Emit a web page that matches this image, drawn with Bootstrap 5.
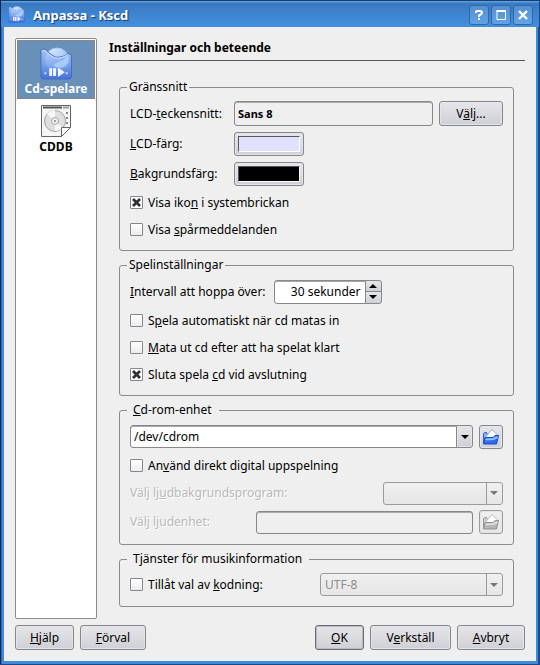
<!DOCTYPE html>
<html lang="sv">
<head>
<meta charset="utf-8">
<meta name="viewport" content="width=device-width, initial-scale=1">
<title>Anpassa - Kscd</title>
<link href="https://cdn.jsdelivr.net/npm/bootstrap@5.3.0/dist/css/bootstrap.min.css" rel="stylesheet">
<style>
  :root { --line: #8b8b8b; --edge: #86878c; --face: #efefef; }
  body { font-family: "Noto Sans", "Open Sans", sans-serif; font-size: 12px; line-height: 18px; color: #000; background: #1c4a80; }
  .win { background: linear-gradient(90deg, #10294a 0 1px, #2a6cb8 1px 2px, #3f8bdb 2px calc(100% - 2px), #1c4a80 calc(100% - 2px)); padding: 0 4px 3px; border-bottom: 1px solid #1c4a80; }
  .titlebar { height: 27px; margin: 0 -3px; padding: 2px 6px 0 7px; color: #fff; background: linear-gradient(#1c3c66 0 1px, #5c9ee4 1px 2px, #3a78bf 3px, #3f86d2 60%, #428fde); }
  .titlebar h1 { font-size: 13px; line-height: 20px; text-shadow: 1px 1px 1px #173a66; }
  .capbtn { width: 20px; height: 20px; margin-left: 2px; padding: 0; border: 1px solid #2f68a8; border-radius: 3px; background: linear-gradient(#5590d0, #62a2e6); }
  .capbtn svg, .pagebtn svg, .iconbtn svg { display: block; margin: auto; }
  .client { background: var(--face); padding: 11px; }
  .pages { width: 82px; background: #fff; border: 1px solid var(--line); border-radius: 2px; padding: 1px; }
  .pagebtn { border: 0; background: #fff; font-weight: 700; padding: 4px 0 0; line-height: 18px; height: 57px; width: 100%; color: #000; }
  .pagebtn.current { background: #6990b8; color: #fff; height: 59px; padding-top: 5px; outline: 1px dotted #a87a5c; outline-offset: -1px; }
  .pagetitle { font-size: 12px; line-height: 18px; font-weight: 700; border-bottom: 1px solid #555; padding: 1px 0 3px; margin-bottom: 0; }
  .options { padding: 17px 11px 0 10px; }
  .group { border: 1px solid var(--line); border-radius: 3px; padding: 5px 10px 10px; margin-bottom: 5px; }
  .group legend { font-size: 12px; line-height: 18px; margin: 0 0 0 -3px; padding: 0 2px; }
  .group legend.wide { padding: 0 7px 0 6px; }
  .stack { display: flex; flex-direction: column; gap: 6px; }
  .line-25 { height: 25px; } .line-24 { height: 24px; } .line-22 { height: 22px; }
  .caption { width: 104px; }
  .field { height: 23px; min-width: 0; padding: 0 3px; font-size: 12px; line-height: 18px; color: #000; background: #fff; border: 1px solid var(--edge); border-radius: 3px; box-shadow: inset 0 1px 0 #aaa; }
  .field:disabled, .field[readonly] { background: var(--face); }
  .fontname { height: 25px; font-size: 11px; font-weight: 700; }
  .dimmed { color: #b9b9b9; text-shadow: 1px 1px 0 #fff; }
  .push { height: 25px; padding: 0 4px; font-size: 12px; line-height: 18px; color: #000; border: 1px solid var(--edge); border-radius: 3px; background: linear-gradient(#e6e6ea, #cfd0d5); box-shadow: inset 0 0 0 1px #e4e5e9; }
  .push.primary { border-color: #6c6d72; box-shadow: inset 0 0 0 1px #b9bac0; }
  .push:disabled { background: linear-gradient(#f0f0f0, #e6e6e6); border-color: #9b9b9b; }
  .pick { margin-left: 6px; }
  .w-help { width: 59px; } .w-def { width: 66px; } .w-ok { width: 49px; } .w-apply { width: 81px; } .w-cancel { width: 68px; } .w-pick { width: 64px; }
  .iconbtn { width: 24px; height: 24px; padding: 0; }
  .swatch { width: 70px; height: 24px; padding: 3px; }
  .swatch::-webkit-color-swatch-wrapper { padding: 0; }
  .swatch::-webkit-color-swatch { border: 1px solid #fff; border-top-color: #55565a; border-left-color: #55565a; border-radius: 0; }
  .tick { display: flex; align-items: center; gap: 5px; height: 21px; }
  .tick input { appearance: none; width: 13px; height: 13px; margin: 0; border: 1px solid var(--edge); border-radius: 1px; background: linear-gradient(#fff, #ececec); }
  .tick input:checked { background: #fff url("data:image/svg+xml,%3Csvg xmlns='http://www.w3.org/2000/svg' viewBox='0 0 11 11'%3E%3Cpath d='M2 2l7 7M9 2L2 9' stroke='%23303034' stroke-width='2.8'/%3E%3C/svg%3E"); }
  .spin { width: 108px; height: 24px; }
  .spin .field { height: 24px; text-align: right; border-radius: 3px 0 0 3px; padding-right: 4px; }
  .steps { width: 17px; margin-left: -1px; }
  .steps .push { height: 12px; padding: 0; border-radius: 0 3px 0 0; box-shadow: none; line-height: 0; }
  .steps .push + .push { height: 13px; margin-top: -1px; border-radius: 0 0 3px 0; }
  .steps svg, .arrow svg { display: block; margin: auto; }
  .arrow { width: 17px; height: 23px; padding: 0; margin-left: -1px; border-radius: 0 3px 3px 0; }
  .choice { height: 23px; padding: 0 20px 0 4px; font-size: 12px; border: 1px solid #9b9b9b; border-radius: 3px; color: #8c8c8c; opacity: 1; appearance: none;
    background: linear-gradient(#9b9b9b, #9b9b9b) right 15px top / 1px 100% no-repeat,
      url("data:image/svg+xml,%3Csvg xmlns='http://www.w3.org/2000/svg' width='8' height='4'%3E%3Cpath d='M0 0h8L4 4z' fill='%23777'/%3E%3C/svg%3E") right 4px center no-repeat,
      linear-gradient(#f0f0f0, #e6e6e6); }
  .choice.backend { width: 120px; } .choice.encoding { width: 183px; }
  .device { width: 217px; }
  .footer-row { padding-top: 6px; gap: 6px; }
</style>
</head>
<body>
<div class="win d-flex flex-column min-vh-100">
  <header class="titlebar d-flex align-items-center">
    <svg width="17" height="17" viewBox="0 0 34 34" aria-hidden="true"><use href="#cdfolder"/></svg>
    <h1 class="fw-bold mb-0 ms-2 me-auto">Anpassa - Kscd</h1>
    <button class="capbtn" aria-label="Hjälp"><svg width="12" height="12" viewBox="0 0 12 12" fill="none" stroke="#fff" stroke-width="2"><path d="M3 4V2.500Q3 2 4 2h3q2 0 2 1.500T6 6.500V8M6 9v2"/></svg></button>
    <button class="capbtn" aria-label="Maximera"><svg width="12" height="12" viewBox="0 0 12 12" fill="none" stroke="#fff"><path d="M2 2.500h8.500v8H2z"/><path d="M1.500 2h9.500" stroke-width="2"/></svg></button>
    <button class="capbtn" aria-label="Stäng"><svg width="12" height="12" viewBox="0 0 12 12" stroke="#fff" stroke-width="2.400"><path d="M2 2l8 8M10 2l-8 8"/></svg></button>
  </header>

  <main class="client flex-grow-1 d-flex flex-column">
    <div class="d-flex flex-grow-1">
      <nav class="pages flex-shrink-0" aria-label="Sidor">
        <button class="pagebtn current" aria-current="page">
          <svg width="34" height="33" viewBox="0 0 34 34" aria-hidden="true">
            <defs>
              <linearGradient id="blue" x1="0" y1="0" x2="0" y2="1"><stop offset="0" stop-color="#b4ccfa"/><stop offset=".5" stop-color="#7fa5f0"/><stop offset="1" stop-color="#4169dc"/></linearGradient>
              <linearGradient id="disc" x1="0" y1="0" x2="1" y2="1"><stop offset="0" stop-color="#e6f0fd"/><stop offset="1" stop-color="#78b0ee"/></linearGradient>
            </defs>
            <g id="cdfolder">
              <circle cx="18" cy="13" r="12" fill="url(#disc)" stroke="#a5c6f0"/>
              <path d="M1.500 4q0-1.500 1.500-1.500h3.500l3 3.500 7 4.500q8 .5 13-4l3 1.500q.500 1 .500 2v20q0 3-3 3H4q-2.500 0-2.500-3z" fill="url(#blue)" fill-opacity=".82" stroke="#3f68d6"/>
              <path d="M2.500 3.500h3.500l3 3.500 7 4.500q8 .5 13-4" fill="none" stroke="#d5e4ff" stroke-width="1"/>
              <path d="M14 19q3-3 7-4 6-2 8-7 3 8-3 12-6 3-12-1z" fill="#b4d8fb" fill-opacity=".7"/>
              <path d="M10 22h3v8h-3zM14 22h3v8h-3zM19 21l7 5-7 5z" fill="#eef4ff"/>
              <path d="M5 26h2v2H5zM27 26h2v2h-2z" fill="#c6d8fb"/>
            </g>
          </svg>
          Cd-spelare
        </button>
        <button class="pagebtn">
          <svg width="32" height="34" viewBox="0 0 32 34" aria-hidden="true">
            <path d="M1.500 1.500h29v22l-9 9h-20z" fill="#f5f5f5" stroke="#666"/>
            <path d="M3 3.500h19" stroke="#555" stroke-width="2"/><path d="M23 3.500h6" stroke="#999" stroke-width="2"/>
            <circle cx="15" cy="17" r="10.500" fill="#dedede" stroke="#a5a5a5"/>
            <path d="M15 17L7 10q4-4 8-4zM15 17l8 7q-3 3-8 3z" fill="#f8f8f8"/>
            <circle cx="15" cy="17" r="3.500" fill="#eee" stroke="#aaa"/>
            <circle cx="15" cy="17" r="1" fill="#888"/>
            <path d="M27 8v2M27 13v2M27 18v2" stroke="#888" stroke-width="2"/>
            <path d="M21.500 32.500v-9l9 0z" fill="#fff" stroke="#666"/>
          </svg>
          CDDB
        </button>
      </nav>

      <section class="flex-grow-1 ms-2 ps-1">
        <h2 class="pagetitle">Inställningar och beteende</h2>
        <form class="options">
          <fieldset class="group">
            <legend class="float-none w-auto">Gränssnitt</legend>
            <div class="stack">
              <div class="d-flex align-items-center line-25">
                <label class="caption" for="lcdfont">LCD-<u>t</u>eckensnitt:</label>
                <input class="field fontname flex-grow-1" id="lcdfont" value="Sans 8" readonly>
                <button type="button" class="push w-pick pick">V<u>ä</u>lj...</button>
              </div>
              <div class="d-flex align-items-center line-24">
                <label class="caption" for="lcdcolor"><u>L</u>CD-färg:</label>
                <input type="color" class="push swatch" id="lcdcolor" value="#e0e0ff">
              </div>
              <div class="d-flex align-items-center line-24">
                <label class="caption" for="bgcolor"><u>B</u>akgrundsfärg:</label>
                <input type="color" class="push swatch" id="bgcolor" value="#000000">
              </div>
              <label class="tick"><input type="checkbox" checked><span>Visa iko<u>n</u> i systembrickan</span></label>
              <label class="tick"><input type="checkbox"><span>Visa <u>s</u>pårmeddelanden</span></label>
            </div>
          </fieldset>

          <fieldset class="group">
            <legend class="float-none w-auto">Spelinställningar</legend>
            <div class="stack">
              <div class="d-flex align-items-center line-25">
                <label class="me-2" for="skip"><u>I</u>ntervall att hoppa över:</label>
                <div class="spin d-flex">
                  <input class="field flex-grow-1" id="skip" value="30 sekunder">
                  <div class="steps d-flex flex-column flex-shrink-0">
                    <button type="button" class="push" aria-label="Öka"><svg width="8" height="4" viewBox="0 0 8 4"><path d="M0 4h8L4 0z"/></svg></button>
                    <button type="button" class="push" aria-label="Minska"><svg width="8" height="4" viewBox="0 0 8 4"><path d="M0 0h8L4 4z"/></svg></button>
                  </div>
                </div>
              </div>
              <label class="tick"><input type="checkbox"><span>S<u>p</u>ela automatiskt när cd matas in</span></label>
              <label class="tick"><input type="checkbox"><span><u>M</u>ata ut cd efter att ha spelat klart</span></label>
              <label class="tick"><input type="checkbox" checked><span>Sluta spela <u>c</u>d vid avslutning</span></label>
            </div>
          </fieldset>

          <fieldset class="group">
            <legend class="float-none w-auto wide"><label for="device"><u>C</u>d-rom-enhet</label></legend>
            <div class="stack">
              <div class="d-flex align-items-center line-25">
                <input class="field flex-grow-1 rounded-end-0" id="device" value="/dev/cdrom">
                <button type="button" class="push arrow" aria-label="Visa lista"><svg width="8" height="4" viewBox="0 0 8 4"><path d="M0 0h8L4 4z"/></svg></button>
                <button type="button" class="push iconbtn pick" aria-label="Öppna"><svg width="18" height="18" viewBox="0 0 18 18">
                  <path d="M1.500 15V5.500l1-1h2l1 2v9z" fill="#7fb0f5" stroke="#2b63d8"/>
                  <path d="M4 8.500l6-7 5 5V12H4z" fill="#fff" stroke="#9ab"/>
                  <path d="M1.500 16L3 9.500h8l2-2h3.500L14.500 16z" fill="#2c6cf0" stroke="#1846c8"/>
                  <path d="M3.500 11.500l8-.5 4-2" fill="none" stroke="#8fc0ff" stroke-width="2"/></svg></button>
              </div>
              <label class="tick"><input type="checkbox"><span>An<u>v</u>änd direkt digital uppspelning</span></label>
              <div class="d-flex align-items-center justify-content-between line-22">
                <label class="dimmed" for="backend">Välj lj<u>u</u>dbakgrundsprogram:</label>
                <select class="choice backend" id="backend" disabled><option></option></select>
              </div>
              <div class="d-flex align-items-center line-24">
                <label class="dimmed me-auto" for="audiodev">Välj l<u>j</u>udenhet:</label>
                <input class="field device" id="audiodev" disabled>
                <button type="button" class="push iconbtn pick" aria-label="Öppna" disabled><svg width="18" height="18" viewBox="0 0 18 18">
                  <path d="M1.500 15V5.500l1-1h2l1 2v9z" fill="#ccc" stroke="#999"/>
                  <path d="M4 8.500l6-7 5 5V12H4z" fill="#fff" stroke="#bbb"/>
                  <path d="M1.500 16L3 9.500h8l2-2h3.500L14.500 16z" fill="#b4b4b4" stroke="#909090"/>
                  <path d="M3.500 11.500l8-.5 4-2" fill="none" stroke="#ddd" stroke-width="2"/></svg></button>
              </div>
            </div>
          </fieldset>

          <fieldset class="group">
            <legend class="float-none w-auto wide">Tjänster för musikinformation</legend>
            <div class="d-flex align-items-center justify-content-between">
              <label class="tick"><input type="checkbox"><span>Tillåt val av <u>k</u>odning:</span></label>
              <select class="choice encoding" aria-label="Kodning" disabled><option>UTF-8</option></select>
            </div>
          </fieldset>
        </form>
      </section>
    </div>

    <footer class="footer-row d-flex">
      <button class="push w-help"><u>H</u>jälp</button>
      <button class="push w-def me-auto"><u>F</u>örval</button>
      <button class="push primary w-ok"><u>O</u>K</button>
      <button class="push w-apply">V<u>e</u>rkställ</button>
      <button class="push w-cancel"><u>A</u>vbryt</button>
    </footer>
  </main>
</div>
<script src="https://cdn.jsdelivr.net/npm/bootstrap@5.3.0/dist/js/bootstrap.bundle.min.js"></script>
</body>
</html>
